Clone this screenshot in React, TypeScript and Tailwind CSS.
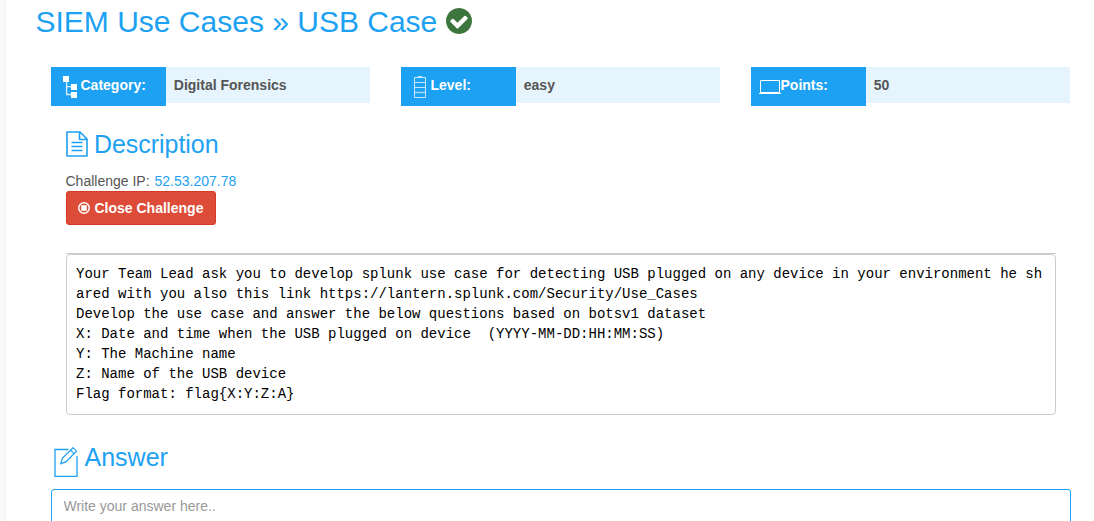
import React from "react";

const description = `Your Team Lead ask you to develop splunk use case for detecting USB plugged on any device in your environment he shared with you also this link https://lantern.splunk.com/Security/Use_Cases
Develop the use case and answer the below questions based on botsv1 dataset
X: Date and time when the USB plugged on device  (YYYY-MM-DD:HH:MM:SS)
Y: The Machine name
Z: Name of the USB device
Flag format: flag{X:Y:Z:A}`;

function CheckCircle() {
  return (
    <svg className="mt-[8px] ml-[8.5px] h-[26px] w-[26px] shrink-0" viewBox="0 0 1536 1536" fill="#3c763d">
      <path d="M1284 606q0-28-18-46l-91-90q-19-19-45-19t-45 19L677 877 451 651q-19-19-45-19t-45 19l-91 90q-18 18-18 46 0 27 18 45l362 362q19 19 45 19 27 0 46-19l543-543q18-18 18-45zm252 162q0 209-103 385.500T1153.500 1433 768 1536t-385.500-103T103 1153.500 0 768t103-385.500T382.500 103 768 0t385.500 103T1433 382.500 1536 768z" />
    </svg>
  );
}

function TreeIcon() {
  return (
    <svg className="mt-[9px] mr-[3.5px] ml-[12px] h-[22px] w-[14px] shrink-0" viewBox="0 0 14 22" fill="#fff">
      <path d="M0 0h6v6H0zM8 8h6v6H8zM8 16h6v6H8z" />
      <path d="M3.600 6v12.500H8M3.600 10.700H8" fill="none" stroke="#fff" strokeWidth="1.300" strokeOpacity=".85" />
    </svg>
  );
}

function BatteryIcon() {
  return (
    <svg className="mt-[9px] mr-[4.5px] ml-[13px] h-[22px] w-[12px] shrink-0" viewBox="0 0 12 22" fill="none" stroke="#fff" strokeOpacity=".75">
      <path d="M.5 1.500h11v20H.5zM1 6.500h10M1 11.500h10M4 .5h4" />
      <path d="M1 16.500h10" strokeWidth="1.500" strokeOpacity=".6" />
    </svg>
  );
}

function LaptopIcon() {
  return (
    <svg className="-mr-[0.5px] mt-[13px] ml-[8px] h-[14px] w-[22px] shrink-0" viewBox="0 0 22 14" fill="none" stroke="#fff">
      <path d="M1.500 12.500V.5h19v12zM0 13.500h22" />
    </svg>
  );
}

function FileIcon() {
  return (
    <svg className="mt-[6px] -ml-[0.5px] h-[26px] w-[22px] shrink-0" viewBox="0 0 22 26" fill="none" stroke="#1da1f2" strokeWidth="1.600" strokeLinejoin="round">
      <path d="M1 1H14l7 7v17H1zM13.500 1v7.500H21M5.500 11.500h11M5.500 15.500h11M5.500 19.500h11" />
    </svg>
  );
}

function PencilIcon() {
  return (
    <svg className="mt-[6px] ml-[3px] h-[30px] w-[24px] shrink-0" viewBox="0 0 24 30" fill="none" stroke="#1da1f2" strokeWidth="1.200">
      <path d="M14.500 2.500H1v27h22V9" strokeWidth="1.300" />
      <path d="M6.800 16.800l1.500-5.500L19 .7l3.500 3.500L11.800 14.900zM16.500 3.200l3.500 3.500" />
    </svg>
  );
}

function Info({ icon, label, value }: { icon: React.ReactNode; label: string; value: string }) {
  return (
    <div className="flex h-[39px] flex-1 items-start text-sm font-bold leading-5">
      <div className="flex h-[39px] w-[115px] shrink-0 items-start bg-[#1da1f2] text-white">
        {icon}
        <span className="pt-[8px]">{label}</span>
      </div>
      <div className="h-[36px] flex-1 bg-[#e6f4fe] px-[7.8px] pt-[8px] text-[#555]">{value}</div>
    </div>
  );
}

export default function App() {
  return (
    <div className="flex h-[521px] w-[1094px] overflow-hidden bg-white font-['Liberation_Sans',Arial,sans-serif] text-[#555]">
      <div className="w-[6px] shrink-0 border-r border-[#f5f5f5] bg-[#fafafa]" />
      <main className="flex min-w-0 flex-1 flex-col pr-[23px] pl-[45px]">
        <h1 className="-ml-[15.5px] flex h-[67px] shrink-0 items-start text-[30px] leading-[33px] text-[#1da1f2]">
          <span className="mt-[5px]">SIEM Use Cases » USB Case</span>
          <CheckCircle />
        </h1>
        <div className="mr-px flex shrink-0 gap-[31px]">
          <Info icon={<TreeIcon />} label="Category:" value="Digital Forensics" />
          <Info icon={<BatteryIcon />} label="Level:" value="easy" />
          <Info icon={<LaptopIcon />} label="Points:" value="50" />
        </div>
        <section className="mr-[15px] ml-[15px] shrink-0 pt-[19px]">
          <h2 className="flex h-[46px] items-start text-[25px] leading-[28px] text-[#1da1f2]">
            <FileIcon />
            <span className="mt-[5px] ml-[6.5px] tracking-[-0.05px]">Description</span>
          </h2>
          <p className="-ml-[0.5px] text-sm leading-5">
            Challenge IP: <a className="ml-[1px] text-[#1da1f2]">52.53.207.78</a>
          </p>
          <button className="flex h-[34px] w-[150px] items-center rounded-[3px] border border-[#d73925] bg-[#dd4b39] pl-[11px] text-sm font-bold text-white">
            <svg className="mr-[4.5px] h-3 w-3" viewBox="0 0 12 12" fill="none" stroke="#fff" strokeWidth="1.500">
              <circle cx="6" cy="6" r="5.250" />
              <path d="M3.200 3.200h5.600v5.600H3.200z" fill="#fff" stroke="none" />
            </svg>
            Close Challenge
          </button>
          <div className="mt-[28px] border-t border-[#ccc]" />
          <pre className="h-[161px] rounded-[4px] border border-[#ccc] px-[9px] pt-[9px] font-['Liberation_Mono',monospace] text-sm leading-5 break-all whitespace-pre-wrap text-black">
            {description}
          </pre>
        </section>
        <section className="shrink-0 pt-[26px]">
          <h2 className="flex h-[48px] items-start text-[25px] leading-[28px] text-[#1da1f2]">
            <PencilIcon />
            <span className="mt-[2px] ml-[6.5px]">Answer</span>
          </h2>
          <input
            className="block h-[44px] w-full rounded-t-[3px] border border-[#1da1f2] px-[11.5px] pb-[10px] text-sm placeholder:text-[#999]"
            placeholder="Write your answer here.."
          />
        </section>
      </main>
    </div>
  );
}
